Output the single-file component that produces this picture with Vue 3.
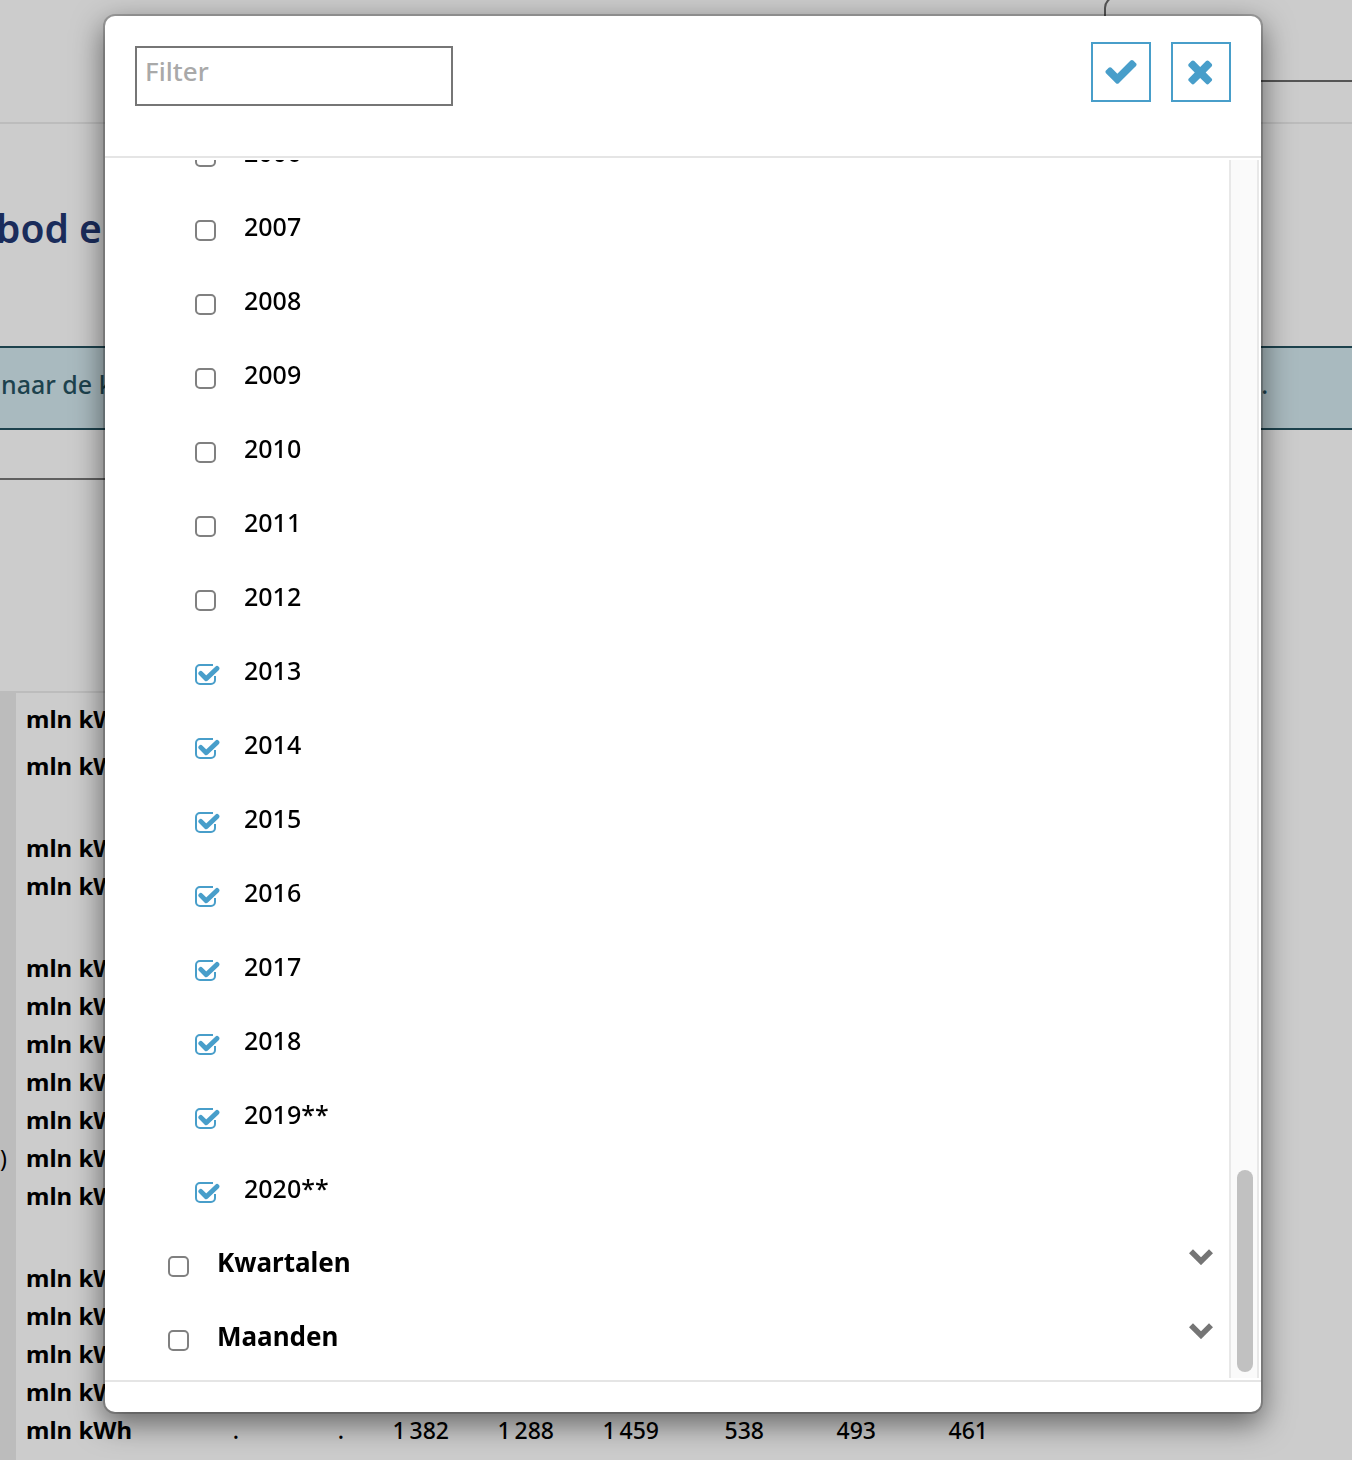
<script setup>
import { ref } from 'vue'

const years = ref([
  { label: '2006', checked: false },
  { label: '2007', checked: false },
  { label: '2008', checked: false },
  { label: '2009', checked: false },
  { label: '2010', checked: false },
  { label: '2011', checked: false },
  { label: '2012', checked: false },
  { label: '2013', checked: true },
  { label: '2014', checked: true },
  { label: '2015', checked: true },
  { label: '2016', checked: true },
  { label: '2017', checked: true },
  { label: '2018', checked: true },
  { label: '2019**', checked: true },
  { label: '2020**', checked: true }
])

const groups = ref([
  { label: 'Kwartalen', checked: false },
  { label: 'Maanden', checked: false }
])

const filter = ref('')

const rows = [
  { size: 'first' },
  { size: 'second' },
  { size: 'tall' },
  { size: 'plain' },
  { size: 'tall' },
  { size: 'plain' },
  { size: 'plain' },
  { size: 'plain' },
  { size: 'plain' },
  { size: 'plain', label: ')' },
  { size: 'plain' },
  { size: 'tall' },
  { size: 'plain' },
  { size: 'plain' },
  { size: 'plain' }
]

const lastValues = ['.', '.', '1\u2009382', '1\u2009288', '1\u2009459', '538', '493', '461']
</script>

<template>
  <main class="page">
    <header class="top">
      <div class="search"></div>
    </header>
    <h1>bod e</h1>
    <div class="notice"><span>naar de k</span><span class="stop">.</span></div>
    <div class="rule"></div>
    <table class="data">
      <colgroup>
        <col class="c-label" />
        <col class="c-unit" />
        <col v-for="n in 6" :key="'a' + n" class="c-num" />
        <col v-for="n in 2" :key="'b' + n" class="c-wide" />
      </colgroup>
      <tbody>
        <tr v-for="(row, i) in rows" :key="i" :class="row.size">
          <th>{{ row.label }}</th>
          <td class="unit">mln kWh</td>
          <td colspan="8"></td>
        </tr>
        <tr class="plain">
          <th></th>
          <td class="unit">mln kWh</td>
          <td v-for="(v, i) in lastValues" :key="i" class="num">{{ v }}</td>
        </tr>
        <tr class="plain">
          <th></th>
          <td colspan="9"></td>
        </tr>
      </tbody>
    </table>
  </main>

  <div class="backdrop">
    <section class="modal" role="dialog" aria-modal="true">
      <header class="modal-head">
        <input v-model="filter" class="filter" type="text" placeholder="Filter" aria-label="Filter" />
        <div class="actions">
          <button type="button" aria-label="OK">
            <svg viewBox="0 40 1792 1792"><path d="M1671 566q0 40-28 68l-724 724-136 136q-28 28-68 28t-68-28l-136-136-362-362q-28-28-28-68t28-68l136-136q28-28 68-28t68 28l294 295 656-657q28-28 68-28t68 28l136 136q28 28 28 68z" /></svg>
          </button>
          <button type="button" aria-label="Sluiten">
            <svg viewBox="40 40 1792 1792"><path d="M1490 1322q0 40-28 68l-136 136q-28 28-68 28t-68-28l-294-294-294 294q-28 28-68 28t-68-28l-136-136q-28-28-28-68t28-68l294-294-294-294q-28-28-28-68t28-68l136-136q28-28 68-28t68 28l294 294 294-294q28-28 68-28t68 28l136 136q28 28 28 68t-28 68l-294 294 294 294q28 28 28 68z" /></svg>
          </button>
        </div>
      </header>

      <div class="modal-body">
        <div class="tree">
          <label v-for="y in years" :key="y.label" class="item year">
            <span class="box">
              <input v-model="y.checked" type="checkbox" />
              <svg v-if="y.checked" viewBox="0 0 25 21">
                <path class="frame" d="M18 1H5a4 4 0 0 0-4 4v11a4 4 0 0 0 4 4h11a4 4 0 0 0 4-4v-4" />
                <path class="tick" d="M5.8 9.4 11.2 14.8 22 4.4" />
              </svg>
            </span>
            <span class="text">{{ y.label }}</span>
          </label>
          <div v-for="g in groups" :key="g.label" class="group">
            <label class="item">
              <span class="box"><input v-model="g.checked" type="checkbox" /></span>
              <span class="text strong">{{ g.label }}</span>
            </label>
            <button type="button" class="toggle" :aria-label="g.label + ' uitklappen'">
              <svg viewBox="0 0 24 16"><path d="M2 2.2 12 12.2 22 2.2" /></svg>
            </button>
          </div>
        </div>
        <div class="track"><div class="thumb"></div></div>
      </div>
      <footer class="modal-foot"></footer>
    </section>
  </div>
</template>

<style>
body {
  background: #ccc;
  overflow: hidden;
}
</style>

<style scoped>
* {
  box-sizing: border-box;
}

.page {
  height: 100vh;
  overflow: hidden;
  background: #ccc;
  color: #000;
  font-family: "Noto Sans", sans-serif;
}

.top {
  display: flex;
  justify-content: flex-end;
  height: 124px;
  border-bottom: 2px solid #bcbcbc;
}

.search {
  width: 248px;
  height: 86px;
  margin-top: -4px;
  border: 2px solid #555;
  border-right: 0;
  border-radius: 12px 0 0 12px;
}

h1 {
  margin: 78px 0 92px -4px;
  color: #1a2c5b;
  font-size: 39px;
  font-weight: 600;
  line-height: 52px;
}

.notice {
  display: flex;
  justify-content: space-between;
  height: 84px;
  padding: 16px 84px 0 1px;
  border: solid #1d424d;
  border-width: 2px 0;
  background: #a9babf;
  color: #1d424d;
  font-size: 25px;
  font-weight: 500;
  line-height: 40px;
}

.rule {
  width: 80%;
  height: 2px;
  margin: 48px 0 211px;
  background: #5f5f5f;
}

.data {
  width: 996px;
  border-top: 2px solid #bcbcbc;
  border-spacing: 0;
  table-layout: fixed;
  font-size: 23px;
  line-height: 38px;
}

.c-label { width: 16px; }
.c-unit { width: 126px; }
.c-num { width: 105px; }
.c-wide { width: 112px; }

.data th,
.data td {
  padding: 0;
  vertical-align: bottom;
}

.data th {
  background: #bcbcbc;
  font-weight: 400;
  text-align: left;
}

.data .unit {
  padding-left: 10px;
  font-size: 24px;
  font-weight: 700;
  white-space: nowrap;
}

.data .num {
  padding-right: 8px;
  font-weight: 500;
  text-align: right;
}

.first { height: 45px; }
.second { height: 47px; }
.tall { height: 82px; }
.plain { height: 38px; }

.backdrop {
  position: fixed;
  inset: 0;
  display: flex;
  padding: 16px 91px 48px 105px;
}

.modal {
  display: flex;
  flex: 1;
  flex-direction: column;
  border-radius: 10px;
  background: #fff;
  box-shadow: 0 0 0 2px rgba(0, 0, 0, 0.2), 0 10px 30px 2px rgba(0, 0, 0, 0.5);
  color: #000;
  font-family: "Noto Sans", sans-serif;
}

.modal-head {
  display: flex;
  align-items: flex-start;
  justify-content: space-between;
  height: 142px;
  padding: 26px 30px 0;
  border-bottom: 2px solid #e5e5e5;
}

.filter {
  width: 318px;
  height: 60px;
  margin-top: 4px;
  padding: 0 8px 10px;
  border: 2px solid #767676;
  background: #fff;
  color: #000;
  font: 500 26px "Noto Sans", sans-serif;
}

.filter::placeholder {
  color: #a9a9a9;
}

.actions {
  display: flex;
  gap: 20px;
}

.actions button {
  display: grid;
  width: 60px;
  height: 60px;
  padding: 0;
  place-content: center;
  border: 2px solid #489eca;
  background: #fff;
}

.actions svg {
  width: 36px;
  height: 36px;
  fill: #489eca;
}

.modal-body {
  display: flex;
  flex: 1;
  min-height: 0;
  margin: 2px;
}

.tree {
  display: flex;
  flex: 1;
  flex-direction: column;
  justify-content: flex-end;
  overflow: hidden;
  padding-left: 61px;
}

.item {
  display: flex;
  flex: none;
  align-items: center;
  gap: 24px;
  height: 74px;
  padding-bottom: 2px;
}

.year {
  padding-left: 27px;
}

.group {
  display: flex;
  flex: none;
  align-items: center;
  justify-content: space-between;
  padding-right: 16px;
}

.box {
  display: grid;
  width: 25px;
}

.box input,
.box svg {
  grid-area: 1 / 1;
}

.box input {
  width: 21px;
  height: 21px;
  margin: 0;
  appearance: none;
  border: 2px solid #808080;
  border-radius: 5px;
}

.box input:checked {
  border-color: transparent;
}

.box svg {
  width: 25px;
  height: 21px;
  fill: none;
  stroke: #489eca;
}

.frame {
  stroke-width: 2;
}

.tick {
  stroke-linejoin: round;
  stroke-linecap: round;
  stroke-width: 4.8;
}

.text {
  padding-bottom: 8px;
  font-size: 25px;
  font-weight: 500;
  line-height: 32px;
}

.strong {
  font-size: 26px;
  font-weight: 700;
}

.toggle {
  padding: 0 0 20px;
  border: 0;
  background: none;
}

.toggle svg {
  display: block;
  width: 24px;
  height: 16px;
  fill: none;
  stroke: #757575;
  stroke-width: 5.6;
}

.track {
  display: flex;
  width: 30px;
  padding: 6px 4px 6px 6px;
  border: solid #e8e8e8;
  border-width: 0 2px;
  background: #fafafa;
}

.thumb {
  width: 16px;
  height: 202px;
  margin-top: auto;
  border-radius: 8px;
  background: #c1c1c1;
}

.modal-foot {
  height: 32px;
  border-top: 2px solid #e5e5e5;
}
</style>
